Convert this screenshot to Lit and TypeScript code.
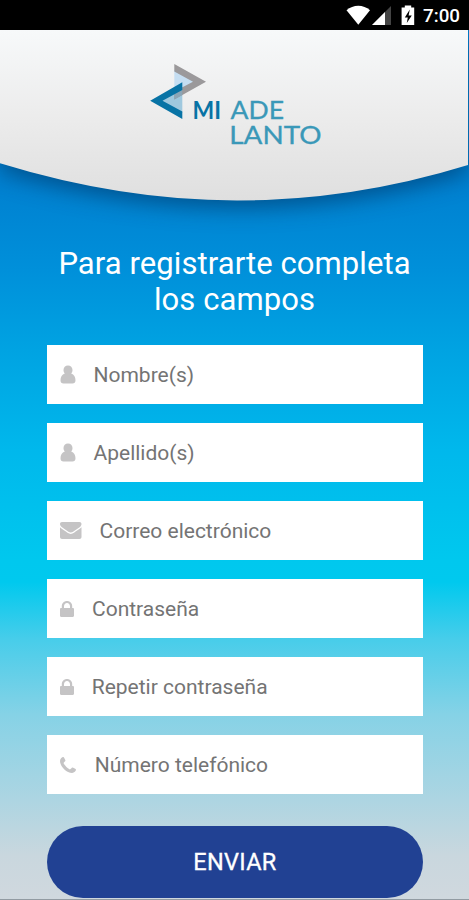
import { LitElement, html, css, svg } from "lit";
import { customElement, property } from "lit/decorators.js";

const ICONS = {
  user: { w: 16, h: 19, art: svg`<path d="M3.500 5C3.500 2.300 5.300.5 8 .5s4.500 1.800 4.500 4.500c0 1.500-.5 2.600-1.300 3.400C14 9.200 15.500 12 15.500 15.200c0 2.100-1.200 3.300-3 3.300h-9c-1.800 0-3-1.200-3-3.300C.5 12 2 9.200 4.800 8.400 4 7.600 3.500 6.500 3.500 5z"/>` },
  mail: { w: 22, h: 17, art: svg`<path d="M2 0h17.500c1.100 0 2 .8 2 1.900 0 1.500-1.100 2.800-2.300 3.600l-6.100 4.200c-1.500 1-3.200 1-4.700 0L2.300 5.500C1.100 4.700 0 3.400 0 2.100 0 .8.800 0 2 0z M0 5.300c2.200 2 4.900 3.600 7.500 5.500 2 1.500 4.500 1.500 6.500 0 2.500-1.900 5.300-3.500 7.500-5.500V15c0 1.100-.9 2-2 2H2c-1.100 0-2-.9-2-2z"/>` },
  lock: { w: 14, h: 16, art: svg`<path fill-rule="evenodd" d="M1.800 7V5.200C1.800 2.200 4.100 0 7 0s5.200 2.200 5.200 5.200V7h.6c.7 0 1.200.5 1.200 1.200v6.600c0 .7-.5 1.200-1.200 1.200H1.200C.5 16 0 15.500 0 14.800V8.200C0 7.500.5 7 1.200 7zM4 7h6V5.200C10 3.400 8.700 2 7 2S4 3.400 4 5.200z"/>` },
  phone: { w: 16, h: 16, art: svg`<path d="M16 12.600c0 1.700-1.800 3.400-3.900 3.400C6.500 16 0 9.400 0 3.900 0 1.800 1.700 0 3.400 0c.5 0 .8.900 2 3.300.4.900-1.800 1.900-1.800 2.800 0 1.400 4.900 6.300 6.300 6.300.9 0 1.900-2.200 2.800-1.800 2.400 1.200 3.300 1.500 3.300 2z"/>` },
};
type IconName = keyof typeof ICONS;

@customElement("status-bar")
class StatusBar extends LitElement {
  static styles = css`
    :host { display: block; height: 30px; background: #000; }
    svg { display: block; width: 100%; height: 30px; }
    text { font: 500 18.5px Roboto, sans-serif; fill: #fff; }
  `;
  render() {
    return html`<svg viewBox="0 0 469 30">
      <path fill="#fff" d="M346.500 10.200C353.200 4.200 363.400 4.200 370 10.200L358.300 24.700z" />
      <path fill="#444" d="M391 6v19h-19z" />
      <path fill="#fff" d="M385 12v13h-13z" />
      <path fill="#fff" d="M404.800 5.500h6.400v2h3V25h-12.600V7.500h3.200z" />
      <path fill="#000" d="M409.800 9.500l-5 8h3l-1 5.500 5-7.500h-3.200z" />
      <text x="423" y="22" textLength="37" lengthAdjust="spacingAndGlyphs">7:00</text>
    </svg>`;
  }
}

@customElement("brand-header")
class BrandHeader extends LitElement {
  static styles = css`
    :host { display: block; height: 216px; }
    svg { display: block; width: 100%; height: 216px; overflow: visible; }
    .curve { filter: drop-shadow(0 7px 11px rgba(0, 35, 75, 0.5)); }
    text { font: 24.5px Lato, sans-serif; fill: #3a98b8; stroke: #3a98b8; stroke-width: 0.3px; }
    .strong { fill: #0873a5; stroke: #0873a5; font-weight: 700; stroke-width: 0; }
  `;
  render() {
    return html`<svg viewBox="0 30 469 216">
      <defs>
        <linearGradient id="paper" x1="0" y1="0" x2="0" y2="1">
          <stop offset="0" stop-color="#f7f9fa" />
          <stop offset="0.500" stop-color="#ececec" />
          <stop offset="1" stop-color="#dfdfdf" />
        </linearGradient>
        <clipPath id="below"><rect x="0" y="30" width="469" height="260" /></clipPath>
      </defs>
      <g clip-path="url(#below)">
        <path class="curve" fill="url(#paper)" d="M0 30H468V165Q353 200.500 237 200.500T0 163.300z" />
      </g>
      <path fill="#c5def2" d="M174.300 70L195 82L174.300 93z" />
      <path fill="#9fc8de" d="M182.300 88V113L160 100.800z" />
      <path fill="#9b999b" d="M174.300 64L206 81.700L174.300 99.500V91.500L193 81.800L174.300 71.500z" />
      <path fill="#8ba5b6" d="M174.300 91.500L182.300 87.300V95L174.300 99.500z" />
      <path fill="#0873a5" d="M182.300 82.300V90L162.500 100.800L182.300 111.500V119L150.200 100.800z" />
      <text class="strong" x="192.500" y="119.300" textLength="28.500" lengthAdjust="spacingAndGlyphs">MI</text>
      <text x="230.500" y="119.300" textLength="53.500" lengthAdjust="spacingAndGlyphs">ADE</text>
      <text x="229.300" y="144" textLength="92.200" lengthAdjust="spacingAndGlyphs">LANTO</text>
    </svg>`;
  }
}

@customElement("form-field")
class FormField extends LitElement {
  @property() icon: IconName = "user";
  @property() label = "";
  @property({ type: Number }) gap = 18;
  static styles = css`
    :host { display: flex; align-items: center; box-sizing: border-box; height: 59px; padding-left: 13px; background: #fff; }
    svg { display: block; flex: none; fill: #c5c4c5; }
    .label { font: 21px/59px Roboto, sans-serif; color: #747474; padding-top: 1px; white-space: nowrap; }
  `;
  render() {
    const i = ICONS[this.icon];
    return html`<svg width=${i.w} height=${i.h} viewBox="0 0 ${i.w} ${i.h}">${i.art}</svg>
      <span class="label" style="margin-left:${this.gap}px">${this.label}</span>`;
  }
}

@customElement("app-root")
class AppRoot extends LitElement {
  static styles = css`
    :host {
      display: block; box-sizing: border-box; height: 900px; overflow: hidden;
      border-bottom: 1px solid #929ba2;
      background: linear-gradient(#0080d0 0, #0080d0 180px, #0090da 270px, #00a3e2 350px, #00b8ec 450px, #00c8ee 560px, #00c9ee 582px, #48cdea 640px, #86d2e6 715px, #add5e2 800px, #c9d7de 855px, #d0d8de 900px);
    }
    h1 { margin: 0 0 27px; text-align: center; font: 400 31px/36px Roboto, sans-serif; color: #fff; letter-spacing: 0.08px; }
    .form { display: flex; flex-direction: column; gap: 19px; margin: 0 46px 0 47px; }
    button {
      height: 72px; margin-top: 13px; padding: 1px 0 0; border: 0; border-radius: 36px;
      background: #214193; color: #fff; font: 400 23.5px/71px Roboto, sans-serif; letter-spacing: 0.3px;
      -webkit-text-stroke: 0.3px #fff;
    }
  `;
  private fields: { icon: IconName; label: string; gap: number }[] = [
    { icon: "user", label: "Nombre(s)", gap: 17.5 },
    { icon: "user", label: "Apellido(s)", gap: 17.5 },
    { icon: "mail", label: "Correo electrónico", gap: 17.5 },
    { icon: "lock", label: "Contraseña", gap: 18 },
    { icon: "lock", label: "Repetir contraseña", gap: 17.7 },
    { icon: "phone", label: "Número telefónico", gap: 18.7 },
  ];
  render() {
    return html`
      <status-bar></status-bar>
      <brand-header></brand-header>
      <h1>Para registrarte completa<br />los campos</h1>
      <div class="form">
        ${this.fields.map((f) => html`<form-field .icon=${f.icon} .label=${f.label} .gap=${f.gap}></form-field>`)}
        <button type="button">ENVIAR</button>
      </div>`;
  }
}
